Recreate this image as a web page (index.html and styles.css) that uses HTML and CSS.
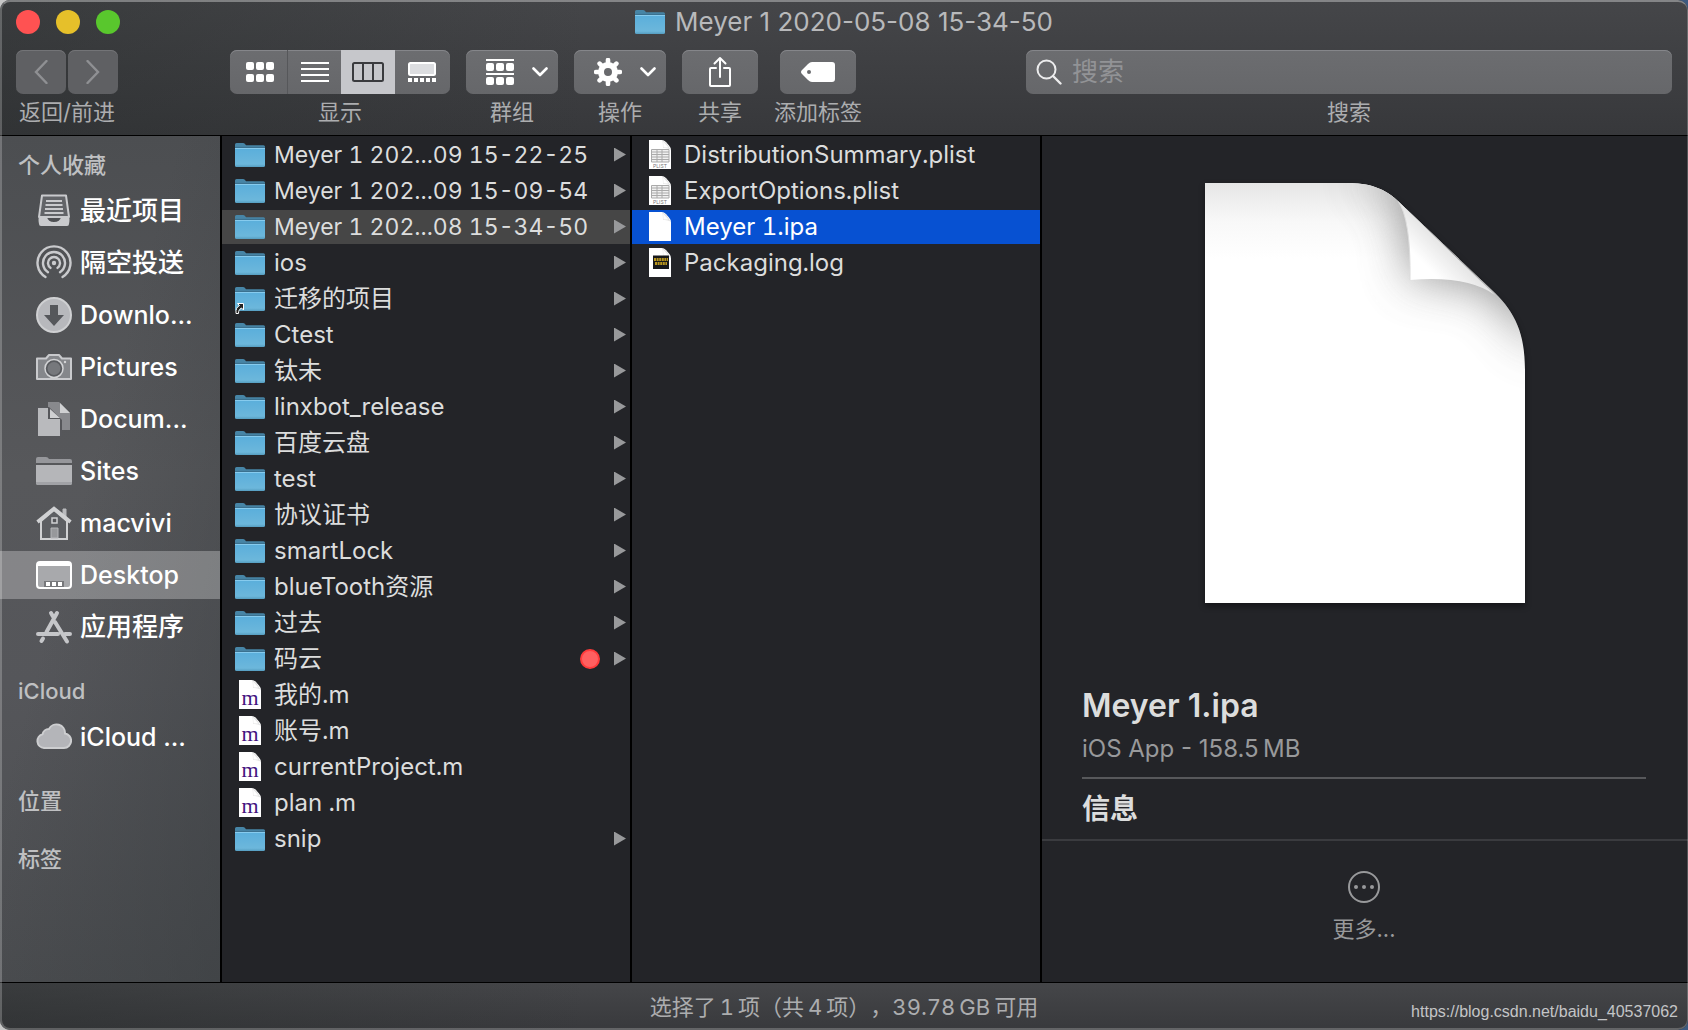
FILE: index.html
```html
<!DOCTYPE html>
<html lang="zh-CN">
<head>
<meta charset="utf-8">
<meta name="viewport" content="width=device-width, initial-scale=1">
<title>Meyer 1 2020-05-08 15-34-50</title>
<link rel="stylesheet" href="styles.css">
</head>
<body>
<svg class="sprite" width="0" height="0" aria-hidden="true">
  <defs>
    <linearGradient id="folder-fill" x1="0" y1="0" x2="0" y2="1">
      <stop offset="0" stop-color="#5aaedb"/><stop offset="0.85" stop-color="#6cb7db"/><stop offset="1" stop-color="#559dc0"/>
    </linearGradient>
    <symbol id="folder" viewBox="0 0 30 24">
      <path d="M0 1.5Q0 0 1.5 0H8Q9.300 0 10 1L11 2.200H28.500Q30 2.200 30 3.700V8H0Z" fill="#4785a6"/>
      <path d="M0 5H30V22.500Q30 24 28.500 24H1.500Q0 24 0 22.500Z" fill="url(#folder-fill)"/>
      <path d="M0 4.400H30" stroke="#3b6f8c" stroke-width="1"/>
      <path d="M0 5.500H30" stroke="#86cbee" stroke-width="1"/>
    </symbol>
    <symbol id="folder-alias" viewBox="0 0 30 28">
      <use href="#folder" width="30" height="24"/>
      <path d="M1 26.500C0.500 22 2 20 4.500 18.500L2.500 16.500H8.500V23L6.500 21C4 22.500 3.500 24 3.500 26.500Z" fill="#222" stroke="#fff" stroke-width="1"/>
    </symbol>
    <symbol id="page" viewBox="0 0 22 29">
      <path d="M0 0H12.500Q15 0 17 2L20 5.500Q22 7.500 22 10.500V29H0Z" fill="#fff"/>
      <path d="M13.500 0.500Q14 5 14 8Q18.500 7.500 21.500 9.500L17.500 3Z" fill="#e2e2e2"/>
      <path d="M14.200 1.500L14.400 7.500L19.500 7.500Z" fill="#fff"/>
    </symbol>
    <symbol id="page-plist" viewBox="0 0 22 29">
      <use href="#page" width="22" height="29"/>
      <path d="M2.500 9.500H20V22H2.500ZM2.500 12H20M2.500 14.500H20M2.500 17H20M2.500 19.500H20M8 9.500V22M13 9.500V22" fill="#f0f0f0" stroke="#aaa" stroke-width="1"/>
      <text x="11" y="28" class="plist-tag">PLIST</text>
    </symbol>
    <symbol id="page-m" viewBox="0 0 22 29">
      <use href="#page" width="22" height="29"/>
      <text x="11" y="25" class="m-tag">m</text>
    </symbol>
    <symbol id="page-log" viewBox="0 0 22 29">
      <use href="#page" width="22" height="29"/>
      <path d="M4 7.500H20V21H4Z" fill="#17181a"/>
      <path d="M5 11.500H19M6 15.500H18" stroke="#b8951d" stroke-width="3" stroke-dasharray="2 .6"/>
    </symbol>
    <symbol id="chev" viewBox="0 0 16 10"><path d="M1.500 1.500L8 8L14.500 1.500" fill="none" stroke="#fff" stroke-width="2.600" stroke-linecap="round" stroke-linejoin="round"/></symbol>
  </defs>
</svg>

<div class="window">
  <header class="titlebar">
    <div class="title-row">
      <div class="lights">
        <button class="light light-close" type="button" aria-label="关闭"></button>
        <button class="light light-min" type="button" aria-label="最小化"></button>
        <button class="light light-zoom" type="button" aria-label="缩放"></button>
      </div>
      <h1 class="title"><svg width="30" height="24"><use href="#folder"/></svg>Meyer 1 2020-05-08 15-34-50</h1>
    </div>
    <div class="toolbar">
      <div class="tool tool-nav">
        <div class="nav-buttons">
          <button class="btn btn-nav" type="button" aria-label="返回"><svg width="14" height="24" viewBox="0 0 14 24"><path d="M12.500 1L2 12L12.500 23" fill="none" stroke="#8f9093" stroke-width="2.400" stroke-linecap="round"/></svg></button>
          <button class="btn btn-nav" type="button" aria-label="前进"><svg width="14" height="24" viewBox="0 0 14 24"><path d="M1.500 1L12 12L1.500 23" fill="none" stroke="#8f9093" stroke-width="2.400" stroke-linecap="round"/></svg></button>
        </div>
        <span class="tool-label">返回/前进</span>
      </div>
      <div class="tool">
        <div class="segments">
          <button class="seg" type="button" aria-label="图标"><svg width="28" height="20" viewBox="0 0 28 20" fill="#fff"><rect width="8" height="8" rx="2"/><rect x="10" width="8" height="8" rx="2"/><rect x="20" width="8" height="8" rx="2"/><rect y="12" width="8" height="8" rx="2"/><rect x="10" y="12" width="8" height="8" rx="2"/><rect x="20" y="12" width="8" height="8" rx="2"/></svg></button>
          <button class="seg" type="button" aria-label="列表"><svg width="28" height="20" viewBox="0 0 28 20"><path d="M0 1H28M0 7H28M0 13H28M0 19H28" stroke="#fff" stroke-width="2"/></svg></button>
          <button class="seg seg-on" type="button" aria-label="分栏" aria-pressed="true"><svg width="32" height="20" viewBox="0 0 32 20"><path d="M2.500 1H29.500Q31 1 31 2.500V17.500Q31 19 29.500 19H2.500Q1 19 1 17.500V2.500Q1 1 2.500 1ZM11 1V19M21 1V19" fill="none" stroke="#3a3b3e" stroke-width="2"/></svg></button>
          <button class="seg" type="button" aria-label="画廊"><svg width="28" height="20" viewBox="0 0 28 20"><rect x="1" y="1" width="26" height="12" rx="1.500" fill="#dcdde0" stroke="#fff" stroke-width="2"/><path d="M0 18H28" stroke="#fff" stroke-width="4" stroke-dasharray="4 2"/></svg></button>
        </div>
        <span class="tool-label">显示</span>
      </div>
      <div class="tool">
        <button class="btn btn-menu" type="button" aria-label="群组">
          <svg width="28" height="26" viewBox="0 0 28 26" fill="#fff"><rect width="28" height="2"/><rect y="14" width="28" height="2"/><rect y="4" width="8" height="8" rx="2"/><rect x="10" y="4" width="8" height="8" rx="2"/><rect x="20" y="4" width="8" height="8" rx="2"/><rect y="18" width="8" height="8" rx="2"/><rect x="10" y="18" width="8" height="8" rx="2"/><rect x="20" y="18" width="8" height="8" rx="2"/></svg>
          <svg width="16" height="10"><use href="#chev"/></svg>
        </button>
        <span class="tool-label">群组</span>
      </div>
      <div class="tool">
        <button class="btn btn-menu" type="button" aria-label="操作">
          <svg width="28" height="28" viewBox="-14 -14 28 28"><circle r="7" fill="none" stroke="#fff" stroke-width="6"/><g stroke="#fff" stroke-width="4.600" stroke-linecap="round"><path d="M0 -9V-12M0 9V12M-9 0H-12M9 0H12M-6.400 -6.400L-8.400 -8.400M6.400 -6.400L8.400 -8.400M-6.400 6.400L-8.400 8.400M6.400 6.400L8.400 8.400"/></g></svg>
          <svg width="16" height="10"><use href="#chev"/></svg>
        </button>
        <span class="tool-label">操作</span>
      </div>
      <div class="tool">
        <button class="btn btn-icon" type="button" aria-label="共享"><svg width="24" height="32" viewBox="0 0 24 32"><path d="M8 12H3Q2 12 2 13V29Q2 30 3 30H21Q22 30 22 29V13Q22 12 21 12H16M12 21V2M6.500 7.500L12 2L17.500 7.500" fill="none" stroke="#fff" stroke-width="2" stroke-linecap="round" stroke-linejoin="round"/></svg></button>
        <span class="tool-label">共享</span>
      </div>
      <div class="tool">
        <button class="btn btn-icon" type="button" aria-label="添加标签"><svg width="34" height="20" viewBox="0 0 34 20"><path fill-rule="evenodd" d="M11 0H31Q34 0 34 3V17Q34 20 31 20H11Q9 20 7 18L1 12Q-1 10 1 8L7 2Q9 0 11 0ZM8 8A2 2 0 1 0 8 12A2 2 0 1 0 8 8Z" fill="#fff"/></svg></button>
        <span class="tool-label">添加标签</span>
      </div>
      <div class="tool tool-search">
        <div class="search-box">
          <svg width="26" height="26" viewBox="0 0 26 26"><circle cx="10.500" cy="10.500" r="9" fill="none" stroke="#ececed" stroke-width="2"/><path d="M17 17L24.500 24.500" stroke="#ececed" stroke-width="2.400" stroke-linecap="round"/></svg>
          <input class="search-input" id="search" type="text" placeholder="搜索">
        </div>
        <label class="tool-label" for="search">搜索</label>
      </div>
    </div>
  </header>

  <main class="content">
    <nav class="sidebar">
      <section>
        <h2 class="side-head">个人收藏</h2>
        <ul class="side-list">
          <li><a class="side-item side-zh" href="#"><svg width="36" height="36" viewBox="0 0 36 36"><path d="M6 2.500H30L33 24H3Z" fill="#626468" stroke="#c9cacd" stroke-width="2" stroke-linejoin="round"/><path d="M10 8H26M9.500 12H26.500M9 16H27M8.500 20H27.500" stroke="#c9cacd" stroke-width="2"/><path d="M3 24H11Q12 29 18 29Q24 29 25 24H33Q34 26 33 31Q33 33 31 33H5Q3 33 3 31Q2 26 3 24Z" fill="#c9cacd"/></svg><span>最近项目</span></a></li>
          <li><a class="side-item side-zh" href="#"><svg width="36" height="36" viewBox="0 0 36 36" fill="none" stroke="#c9cacd" stroke-width="2.400" stroke-linecap="round"><circle cx="18" cy="18" r="2.200" fill="#c9cacd" stroke="none"/><path d="M14.500 22.900A6 6 0 1 1 21.500 22.900M12 27.200A11 11 0 1 1 24 27.200M9.500 32A16.500 16.500 0 1 1 26.500 32"/></svg><span>隔空投送</span></a></li>
          <li><a class="side-item" href="#"><svg width="36" height="36" viewBox="0 0 36 36"><circle cx="18" cy="18" r="17" fill="#b7b8bc" stroke="#cfd0d2" stroke-width="2"/><path d="M14 8H22V18H28L18 29L8 18H14Z" fill="#55575b"/></svg><span>Downlo...</span></a></li>
          <li><a class="side-item" href="#"><svg width="36" height="36" viewBox="0 0 36 36"><path d="M1 9.500H10L13 6H23L26 9.500H35V30H1Z" fill="#85878b" stroke="#c9cacd" stroke-width="2" stroke-linejoin="round"/><circle cx="18" cy="19.500" r="9" fill="#595b5f" stroke="#d2d3d5" stroke-width="1.500"/><circle cx="18" cy="19.500" r="6.500" fill="#76787c"/><circle cx="29" cy="13" r="1.200" fill="#d2d3d5"/></svg><span>Pictures</span></a></li>
          <li><a class="side-item" href="#"><svg width="36" height="36" viewBox="0 0 36 36"><path d="M12 1H23L34 12V29H12Z" fill="#88898d"/><path d="M24 2L34 12H24Z" fill="#cfd0d2"/><path d="M1 6H13L26 19V35H1Z" fill="#56575b"/><path d="M2 7H12V18H24V35H2Z" fill="#b9babd"/><path d="M14 8L24 17H14Z" fill="#cfd0d2"/></svg><span>Docum...</span></a></li>
          <li><a class="side-item" href="#"><svg width="36" height="36" viewBox="0 0 36 36"><path d="M0 6Q0 4 2 4H10Q12 4 13 6H34Q36 6 36 8V10H0Z" fill="#96979b"/><path d="M0 12H36V30Q36 32 34 32H2Q0 32 0 30Z" fill="#b5b6b9"/><path d="M0 29H36V30Q36 32 34 32H2Q0 32 0 30Z" fill="#a1a2a6"/></svg><span>Sites</span></a></li>
          <li><a class="side-item" href="#"><svg width="36" height="36" viewBox="0 0 36 36"><path d="M27 10V4H30V13" fill="#b9babd" stroke="#b9babd"/><path d="M5 16V34H31V16L18 5Z" fill="#5d5f63" stroke="#d0d1d3" stroke-width="2"/><path d="M1.500 17L18 3.500L34.500 17" fill="none" stroke="#d0d1d3" stroke-width="3.600"/><path d="M16 13H21V18H16Z" fill="#56575b" stroke="#d0d1d3" stroke-width="1.500"/><path d="M15 23H22V33H15Z" fill="#97989b" stroke="#b5b6b9"/></svg><span>macvivi</span></a></li>
          <li><a class="side-item side-on" href="#" aria-current="page"><svg width="36" height="36" viewBox="0 0 36 36"><rect x="1" y="5" width="34" height="26" rx="3" fill="#a8a9ac" stroke="#fff" stroke-width="2"/><path d="M1 7Q1 5 4 5H32Q35 5 35 7V9H1Z" fill="#fff"/><rect x="8" y="24" width="20" height="6" fill="#77787b"/><path d="M10 25H14V29H10ZM16 25H20V29H16ZM22 25H26V29H22Z" fill="#fff"/></svg><span>Desktop</span></a></li>
          <li><a class="side-item side-zh" href="#"><svg width="36" height="36" viewBox="0 0 36 36" stroke="#c5c6c9" stroke-width="4" stroke-linecap="round"><path d="M15 4L17 7.500M21 4L10.500 23M7 29.500L5.500 32M2 25H22M29 25H34M19 13L31 32.500"/></svg><span>应用程序</span></a></li>
        </ul>
      </section>
      <section>
        <h2 class="side-head">iCloud</h2>
        <ul class="side-list">
          <li><a class="side-item" href="#"><svg width="36" height="36" viewBox="0 0 36 36"><path d="M8 29A7 7 0 0 1 6.500 15.300A6.500 6.500 0 0 1 13 10A8.500 8.500 0 0 1 29 14.500A7.300 7.300 0 0 1 28 29Z" fill="#b4b5b9" stroke="#cdced0" stroke-width="2"/></svg><span>iCloud ...</span></a></li>
        </ul>
      </section>
      <section><h2 class="side-head">位置</h2></section>
      <section><h2 class="side-head">标签</h2></section>
    </nav>

    <ul class="column">
      <li><a class="file file-dir file-stamp" href="#"><svg class="file-icon"><use href="#folder" height="24" y="3"/></svg><span class="file-name">Meyer 1 202...09 15-22-25</span></a></li>
      <li><a class="file file-dir file-stamp" href="#"><svg class="file-icon"><use href="#folder" height="24" y="3"/></svg><span class="file-name">Meyer 1 202...09 15-09-54</span></a></li>
      <li><a class="file file-dir file-stamp file-open" href="#"><svg class="file-icon"><use href="#folder" height="24" y="3"/></svg><span class="file-name">Meyer 1 202...08 15-34-50</span></a></li>
      <li><a class="file file-dir" href="#"><svg class="file-icon"><use href="#folder" height="24" y="3"/></svg><span class="file-name">ios</span></a></li>
      <li><a class="file file-dir" href="#"><svg class="file-icon"><use href="#folder-alias" height="28" y="3"/></svg><span class="file-name">迁移的项目</span></a></li>
      <li><a class="file file-dir" href="#"><svg class="file-icon"><use href="#folder" height="24" y="3"/></svg><span class="file-name">Ctest</span></a></li>
      <li><a class="file file-dir" href="#"><svg class="file-icon"><use href="#folder" height="24" y="3"/></svg><span class="file-name">钛未</span></a></li>
      <li><a class="file file-dir" href="#"><svg class="file-icon"><use href="#folder" height="24" y="3"/></svg><span class="file-name">linxbot_release</span></a></li>
      <li><a class="file file-dir" href="#"><svg class="file-icon"><use href="#folder" height="24" y="3"/></svg><span class="file-name">百度云盘</span></a></li>
      <li><a class="file file-dir" href="#"><svg class="file-icon"><use href="#folder" height="24" y="3"/></svg><span class="file-name">test</span></a></li>
      <li><a class="file file-dir" href="#"><svg class="file-icon"><use href="#folder" height="24" y="3"/></svg><span class="file-name">协议证书</span></a></li>
      <li><a class="file file-dir" href="#"><svg class="file-icon"><use href="#folder" height="24" y="3"/></svg><span class="file-name">smartLock</span></a></li>
      <li><a class="file file-dir" href="#"><svg class="file-icon"><use href="#folder" height="24" y="3"/></svg><span class="file-name">blueTooth资源</span></a></li>
      <li><a class="file file-dir" href="#"><svg class="file-icon"><use href="#folder" height="24" y="3"/></svg><span class="file-name">过去</span></a></li>
      <li><a class="file file-dir" href="#"><svg class="file-icon"><use href="#folder" height="24" y="3"/></svg><span class="file-name">码云</span><span class="tag-dot"></span></a></li>
      <li><a class="file" href="#"><svg class="file-icon"><use href="#page-m" height="29"/></svg><span class="file-name">我的.m</span></a></li>
      <li><a class="file" href="#"><svg class="file-icon"><use href="#page-m" height="29"/></svg><span class="file-name">账号.m</span></a></li>
      <li><a class="file" href="#"><svg class="file-icon"><use href="#page-m" height="29"/></svg><span class="file-name">currentProject.m</span></a></li>
      <li><a class="file" href="#"><svg class="file-icon"><use href="#page-m" height="29"/></svg><span class="file-name">plan .m</span></a></li>
      <li><a class="file file-dir" href="#"><svg class="file-icon"><use href="#folder" height="24" y="3"/></svg><span class="file-name">snip</span></a></li>
    </ul>

    <ul class="column">
      <li><a class="file" href="#"><svg class="file-icon"><use href="#page-plist" height="29"/></svg><span class="file-name">DistributionSummary.plist</span></a></li>
      <li><a class="file" href="#"><svg class="file-icon"><use href="#page-plist" height="29"/></svg><span class="file-name">ExportOptions.plist</span></a></li>
      <li><a class="file file-selected" href="#" aria-current="true"><svg class="file-icon"><use href="#page" height="29"/></svg><span class="file-name">Meyer 1.ipa</span></a></li>
      <li><a class="file" href="#"><svg class="file-icon"><use href="#page-log" height="29"/></svg><span class="file-name">Packaging.log</span></a></li>
    </ul>

    <section class="preview">
      <div class="preview-art">
        <svg width="320" height="420" viewBox="0 0 320 420">
          <defs>
            <clipPath id="sheet"><path d="M0 0H140C165 0 180 5 195 20L290 110C310 130 320 150 320 187V420H0Z"/></clipPath>
            <linearGradient id="top-shade" x1="0" y1="0" x2="0" y2="1"><stop offset="0" stop-color="#e6e6e6"/><stop offset="0.5" stop-color="#f8f8f8"/><stop offset="1" stop-color="#fff"/></linearGradient>
            <linearGradient id="flap" x1="225" y1="87" x2="252" y2="60" gradientUnits="userSpaceOnUse"><stop offset="0" stop-color="#fff"/><stop offset="1" stop-color="#dcdcdc"/></linearGradient>
            <filter id="soft" x="-60%" y="-60%" width="220%" height="220%"><feGaussianBlur stdDeviation="24"/></filter>
          </defs>
          <g clip-path="url(#sheet)">
            <rect width="320" height="420" fill="#fff"/>
            <rect width="320" height="76" fill="url(#top-shade)"/>
            <path d="M150 -12L190 12Q206 40 205 97Q262 92 290 112L340 170L350 0Z" fill="#6a6a6a" opacity="0.75" filter="url(#soft)"/>
            <path d="M193 18Q206 36 205 97Q262 92 290 112Z" fill="url(#flap)"/>
            <path d="M193 18Q206 36 205 97" fill="none" stroke="#ddd"/>
          </g>
        </svg>
      </div>
      <div class="preview-info">
        <h2 class="preview-name">Meyer 1.ipa</h2>
        <p class="preview-kind">iOS App - 158.5&#8201;MB</p>
        <h3 class="preview-head">信息</h3>
      </div>
      <div class="preview-actions">
        <button class="more" type="button"><svg width="34" height="34" viewBox="0 0 34 34"><circle cx="17" cy="17" r="15" fill="none" stroke="#98999b" stroke-width="2"/><circle cx="9" cy="17" r="2" fill="#98999b"/><circle cx="17" cy="17" r="2" fill="#98999b"/><circle cx="25" cy="17" r="2" fill="#98999b"/></svg>更多...</button>
      </div>
    </section>
  </main>

  <footer class="status">
    <span class="status-text">选择了&#8201;1&#8201;项（共&#8201;4&#8201;项），39.78&#8201;GB&#8201;可用</span>
    <a class="credit" href="#">https://blog.csdn.net/baidu_40537062</a>
  </footer>
</div>
</body>
</html>
```
FILE: styles.css
```css
* { box-sizing: border-box; }

body {
  margin: 0;
  background: linear-gradient(to right, #c8c8c8 0, #2c3440 30%, #3d5a80 100%);
  color: #dcdddd;
  font-family: Inter, "Noto Sans CJK SC", sans-serif;
  font-size: 22px;
  line-height: 32px;
}

h1, h2, h3, p, ul { margin: 0; padding: 0; }
h1, h2, h3 { font-weight: inherit; }
ul { list-style: none; }
a { color: inherit; text-decoration: none; }
svg { display: block; flex: none; }
.sprite { position: absolute; }

button {
  margin: 0;
  padding: 0;
  border: 0;
  background: none;
  color: inherit;
  font: inherit;
}

.window {
  position: relative;
  display: flex;
  flex-direction: column;
  min-height: 100vh;
  border-radius: 10px;
  overflow: hidden;
}

/* Light rim around the window edge */
.window::after {
  content: "";
  position: absolute;
  inset: 0;
  border: 2px solid rgba(255, 255, 255, .22);
  border-top-color: rgba(255, 255, 255, .34);
  border-right-width: 1px;
  border-radius: 10px;
  pointer-events: none;
}

/* Title bar and toolbar */
.titlebar {
  padding: 0 16px 7px;
  border-bottom: 1px solid #000;
  background: linear-gradient(to right, rgba(40, 44, 44, .4), rgba(40, 44, 44, 0) 35%), linear-gradient(#454649, #37383b);
}

.title-row {
  display: grid;
  grid-template-columns: 1fr auto 1fr;
  align-items: center;
  height: 50px;
  padding-bottom: 6px;
}

.lights { display: flex; gap: 16px; }
.light { width: 24px; height: 24px; border-radius: 50%; }
.light-close { background: #ff5252; }
.light-min { background: #e6c02a; }
.light-zoom { background: #59c72d; }

.title {
  display: flex;
  align-items: center;
  gap: 10px;
  color: #b8b9bb;
  font-size: 26px;
}

.toolbar { display: flex; gap: 16px; }

.tool {
  display: flex;
  flex-direction: column;
  align-items: center;
  gap: 2px;
}
.tool-nav { margin-right: 96px; }
.tool-search { flex: 1; margin-left: 148px; }
.tool-label { color: #acadaf; }

.nav-buttons { display: flex; gap: 2px; }

.btn, .segments, .search-box {
  display: flex;
  align-items: center;
  justify-content: center;
  height: 44px;
  border-radius: 7px;
  background: linear-gradient(#6c6d70, #66676a);
  box-shadow: inset 0 1px #85868a;
}
.btn-nav { width: 50px; background: #5f6063; box-shadow: inset 0 1px #737477; }
.btn-menu { width: 92px; gap: 18px; padding-left: 10px; }
.btn-icon { width: 76px; }

.segments { width: 220px; overflow: hidden; }
.seg {
  display: grid;
  place-items: center;
  flex: none;
  width: 54px;
  height: 44px;
}
.seg:first-child { width: 57px; padding-left: 2px; }
.seg:last-child { width: 55px; padding-right: 2px; }
.seg + .seg { border-left: 1px solid #56575a; }
.seg.seg-on { border: 0; background: #c6c7cb; }
.seg-on + .seg { border: 0; }

.search-box {
  align-self: stretch;
  justify-content: flex-start;
  gap: 10px;
  padding: 0 10px;
}
.search-input {
  flex: 1;
  min-width: 0;
  padding: 0;
  border: 0;
  outline: 0;
  background: none;
  color: #fff;
  font: inherit;
  font-size: 26px;
}
.search-input::placeholder { color: #929396; opacity: 1; }

/* Body */
.content {
  flex: 1;
  display: grid;
  grid-template-columns: 222px 410px 410px 1fr;
  background: #232428;
}

.sidebar {
  display: flex;
  flex-direction: column;
  gap: 14px;
  padding-top: 7px;
  border-right: 2px solid #000;
  background: linear-gradient(105deg, rgba(62, 66, 69, 0) 40%, rgba(58, 62, 65, .6)), linear-gradient(#4c4e51, #57585b 40%, #55565a 65%, #4b4d50);
}
.side-head {
  padding-left: 18px;
  color: #bfc0c2;
  font-size: 22px;
  font-weight: 500;
  line-height: 44px;
}
.side-list { display: grid; gap: 4px; padding-bottom: 4px; }
.side-item {
  display: flex;
  align-items: center;
  gap: 8px;
  height: 48px;
  padding-left: 36px;
  color: #fff;
  font-size: 25px;
  font-weight: 500;
  white-space: nowrap;
}
.side-zh { font-size: 26px; }
.side-on { background: rgba(255, 255, 255, .28); }

.column {
  display: flex;
  flex-direction: column;
  gap: 2px;
  padding-top: 2px;
  border-right: 2px solid #000;
}
.file {
  display: flex;
  align-items: center;
  gap: 9px;
  height: 34px;
  padding: 0 4px 1px 13px;
  font-size: 24px;
  font-variant-numeric: tabular-nums;
  white-space: nowrap;
}
.file-stamp { font-size: 23px; }
.file-icon { width: 30px; height: 30px; overflow: visible; }
.file-name { flex: 1; }
.file-dir::after {
  content: "";
  width: 12px;
  height: 14px;
  background: #98999b;
  clip-path: polygon(0 0, 100% 50%, 0 100%);
}
.file-open { background: #464646; }
.file-selected { background: #0751d2; color: #fff; }
.tag-dot {
  width: 20px;
  height: 20px;
  margin-right: 5px;
  border: 2px solid #ff3b3b;
  border-radius: 50%;
  background: #ff6060;
}

.plist-tag { fill: #777; font: 5px Inter, sans-serif; text-anchor: middle; }
.m-tag { fill: #43137f; font: 22px "Liberation Serif", serif; text-anchor: middle; }

/* Preview */
.preview { display: flex; flex-direction: column; }
.preview-art {
  display: flex;
  justify-content: center;
  padding: 47px 0 81px;
  filter: drop-shadow(0 3px 3px rgba(0, 0, 0, .4));
}
.preview-info { padding: 0 42px 12px 40px; border-bottom: 2px solid #3a3b3f; }
.preview-name { font-size: 32px; font-weight: 600; line-height: 44px; }
.preview-kind {
  padding: 5px 0 12px;
  border-bottom: 2px solid #57585b;
  color: #98999b;
  font-size: 24px;
}
.preview-head { padding-top: 12px; font-size: 28px; font-weight: 700; line-height: 36px; }
.preview-actions { display: flex; justify-content: center; padding: 29px 2px 29px 0; }
.more {
  display: grid;
  justify-items: center;
  gap: 9px;
  color: #98999b;
}

/* Status bar */
.status {
  display: grid;
  grid-template-columns: 1fr auto 1fr;
  align-items: center;
  height: 48px;
  padding: 0 10px;
  border-top: 1px solid #000;
  background: linear-gradient(to right, rgba(40, 44, 44, .4), rgba(40, 44, 44, 0) 35%), linear-gradient(#454649, #38393c);
}
.status-text {
  grid-column: 2;
  color: #acadaf;
  font-variant-numeric: tabular-nums;
  text-spacing-trim: space-all;
}
.credit {
  justify-self: end;
  padding-top: 10px;
  color: #c4c5c7;
  font-family: "Liberation Sans", sans-serif;
  font-size: 16px;
  line-height: 24px;
}
```
